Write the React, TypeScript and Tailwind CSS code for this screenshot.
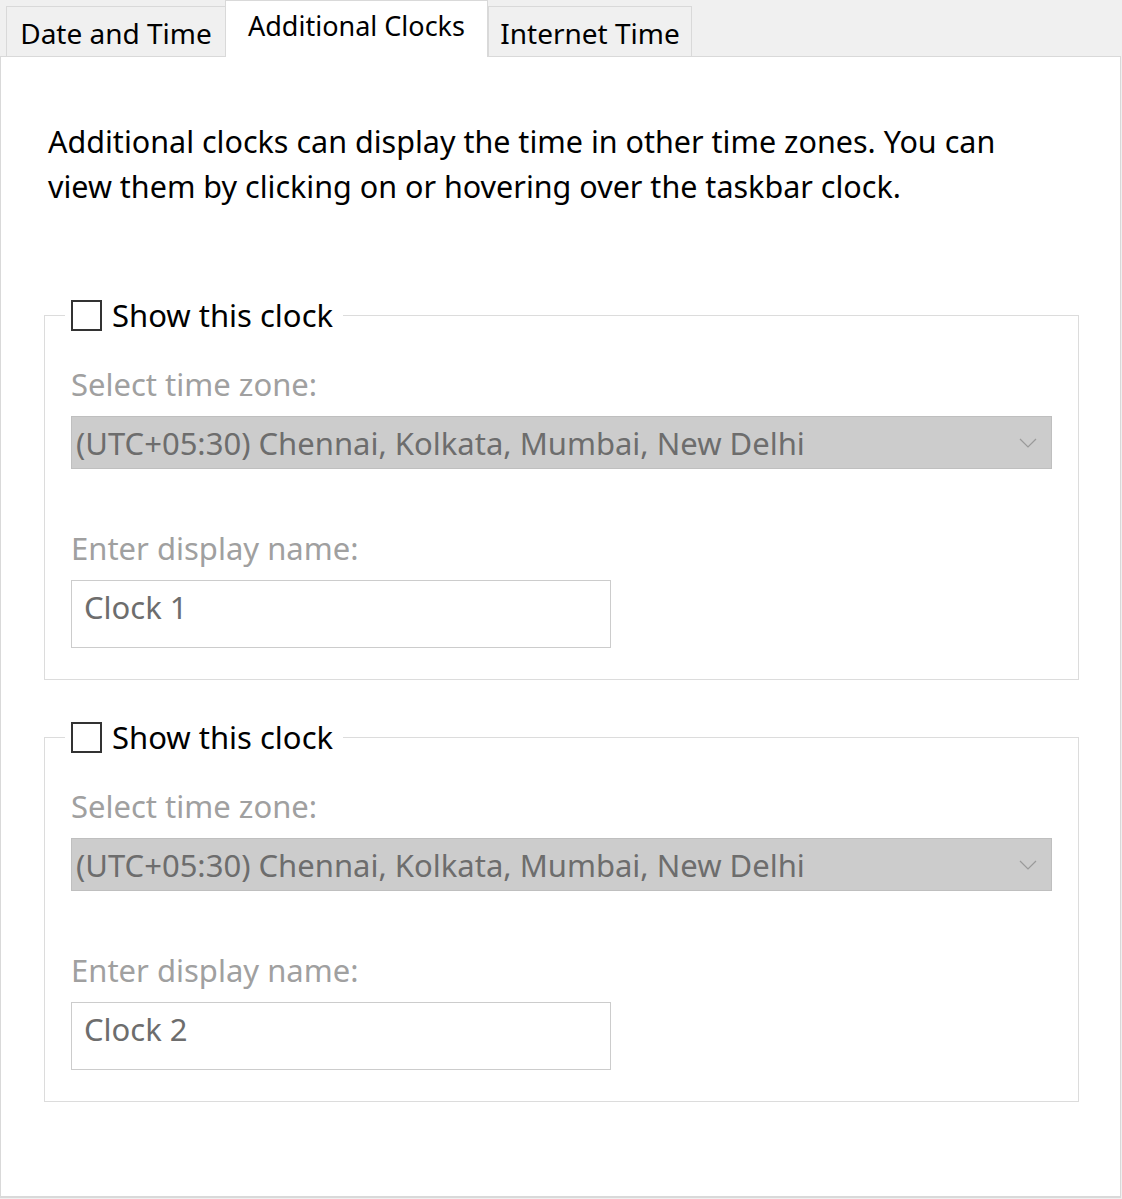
import * as React from "react"

const font = { fontFamily: '"Noto Sans", "Open Sans", sans-serif' }

function Tab({ label, active, width }: { label: string; active?: boolean; width: string }) {
    if (active) {
        return (
            <div
                className={`relative z-10 -mb-px -ml-px flex h-[57px] ${width} justify-center border border-b-0 border-[#d9d9d9] bg-white pt-[5px] text-[27px] leading-[40px] text-black`}
            >
                {label}
            </div>
        )
    }
    return (
        <div
            className={`flex h-[50px] ${width} justify-center border border-b-0 border-[#d9d9d9] bg-[#f0f0f0] pt-[6px] text-[28px] leading-[40px] text-black`}
        >
            {label}
        </div>
    )
}

function ClockGroup({ name }: { name: string }) {
    return (
        <fieldset className="ml-[43px] w-[1035px] border border-[#dcdcdc] p-0 pb-[31px] pl-[26px] pr-[26px]">
            <legend className="-ml-[6px] flex items-center gap-[10px] pl-[6px] pr-[10px] text-[31px] leading-[40px] text-black">
                <span className="box-border block h-[31px] w-[31px] border-2 border-[#333333] bg-white" />
                Show this clock
            </legend>
            <div className="mt-[29px] text-[31px] leading-[40px] text-[#a0a0a0]">Select time zone:</div>
            <div className="mt-[12px] flex h-[53px] w-[981px] items-center justify-between border border-[#bfbfbf] bg-[#cccccc] pl-[4px] pr-[14px]">
                <span className="text-[31px] leading-[40px] text-[#6d6d6d]">
                    (UTC+05:30) Chennai, Kolkata, Mumbai, New Delhi
                </span>
                <svg width="18" height="10" viewBox="0 0 18 10" fill="none">
                    <path d="M1 1 L9 9 L17 1" stroke="#9a9a9a" strokeWidth="1.2" />
                </svg>
            </div>
            <div className="mt-[59px] text-[31px] leading-[40px] text-[#a0a0a0]">Enter display name:</div>
            <div className="mt-[12px] flex h-[68px] w-[540px] items-start border border-[#cccccc] bg-white pl-[12px] pt-[6px]">
                <span className="text-[31px] leading-[40px] text-[#6d6d6d]">{name}</span>
            </div>
        </fieldset>
    )
}

export default function App() {
    return (
        <div className="h-[1199px] w-[1122px] overflow-hidden bg-[#f0f0f0]" style={font}>
            <div className="flex h-[56px] items-end pl-[6px]">
                <Tab label="Date and Time" width="w-[220px]" />
                <Tab label="Additional Clocks" width="w-[263px]" active />
                <Tab label="Internet Time" width="w-[204px]" />
            </div>
            <div className="h-[1142px] w-[1121px] border border-b-2 border-[#d9d9d9] bg-white pt-[62px]">
                <p className="w-[1000px] pl-[47px] text-[30.5px] leading-[45px] text-black">
                    Additional clocks can display the time in other time zones. You can view them by clicking on or
                    hovering over the taskbar clock.
                </p>
                <div className="mt-[86px] flex flex-col gap-[37px]">
                    <ClockGroup name="Clock 1" />
                    <ClockGroup name="Clock 2" />
                </div>
            </div>
        </div>
    )
}
